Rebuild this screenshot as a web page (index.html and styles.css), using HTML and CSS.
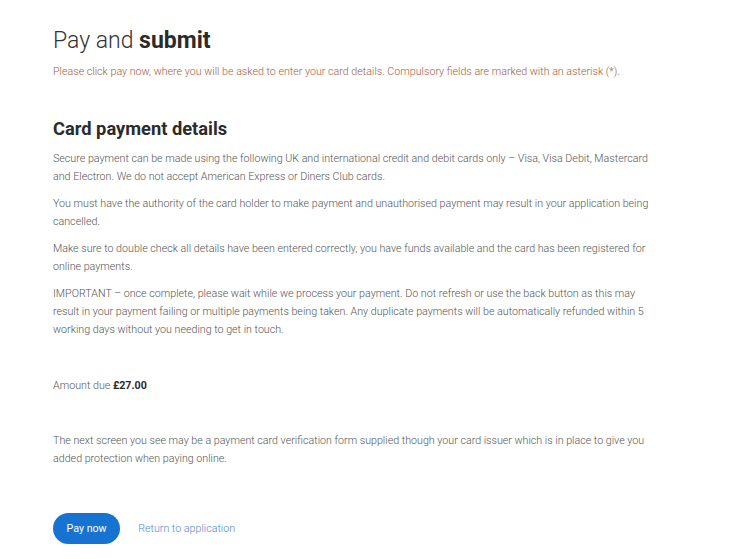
FILE: index.html
```html
<!DOCTYPE html>
<html>
<head>
<meta charset="utf-8">
<link rel="stylesheet" href="styles.css">
</head>
<body>
<main class="page">
  <h1 class="title">Pay and <strong>submit</strong></h1>
  <p class="intro">Please click pay now, where you will be asked to enter your card details. Compulsory fields are marked with an asterisk (*).</p>

  <h2 class="subtitle">Card payment details</h2>
  <p class="text">Secure payment can be made using the following UK and international credit and debit cards only – Visa, Visa Debit, Mastercard and Electron. We do not accept American Express or Diners Club cards.</p>
  <p class="text">You must have the authority of the card holder to make payment and unauthorised payment may result in your application being cancelled.</p>
  <p class="text">Make sure to double check all details have been entered correctly, you have funds available and the card has been registered for online payments.</p>
  <p class="text">IMPORTANT – once complete, please wait while we process your payment. Do not refresh or use the back button as this may result in your payment failing or multiple payments being taken. Any duplicate payments will be automatically refunded within 5 working days without you needing to get in touch.</p>

  <p class="text amount">Amount due <strong>£27.00</strong></p>

  <p class="text notice">The next screen you see may be a payment card verification form supplied though your card issuer which is in place to give you added protection when paying online.</p>

  <div class="actions">
    <button class="btn" type="button">Pay now</button>
    <a class="link" href="#">Return to application</a>
  </div>
</main>
</body>
</html>
```
FILE: styles.css
```css
html, body {
  margin: 0;
  padding: 0;
  background: #ffffff;
}
body {
  font-family: Roboto, "Liberation Sans", Arial, sans-serif;
  color: #555555;
}
.page {
  width: 604px;
  padding: 26px 0 0 53px;
}
.title {
  margin: 0;
  font-size: 23px;
  font-weight: 300;
  line-height: 30px;
  color: #333333;
}
.title strong {
  font-weight: 700;
  color: #2b2b2b;
}
.intro {
  margin: 7px 0 0;
  font-size: 10.7px;
  line-height: 18px;
  font-weight: 300;
  color: #a35c45;
}
.subtitle {
  margin: 36px 0 0;
  font-size: 18.3px;
  line-height: 24px;
  font-weight: 700;
  color: #2b2b2b;
}
.text {
  margin: 9px 0 0;
  font-size: 10.7px;
  line-height: 18px;
  font-weight: 300;
  color: #555555;
}
.text + .text {
  margin-top: 9px;
}
.text strong {
  font-weight: 700;
  color: #2b2b2b;
}
.text.amount {
  margin-top: 38px;
}
.text.notice {
  margin-top: 37px;
}
.actions {
  display: flex;
  align-items: center;
  gap: 18px;
  margin-top: 45px;
}
.btn {
  height: 31px;
  padding: 0 13.5px;
  border: none;
  border-radius: 16px;
  background: #1673d1;
  color: #ffffff;
  font-family: Roboto, "Liberation Sans", Arial, sans-serif;
  font-size: 10.7px;
  font-weight: 400;
  cursor: pointer;
}
.link {
  font-size: 10.7px;
  font-weight: 300;
  color: #4f8ad6;
  text-decoration: none;
}
```
